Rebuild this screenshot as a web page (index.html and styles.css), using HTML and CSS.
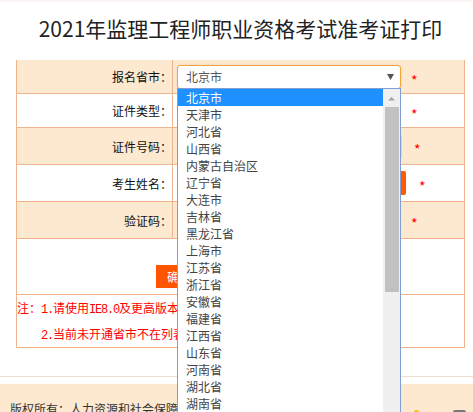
FILE: index.html
```html
<!DOCTYPE html>
<html lang="zh-CN">
<head>
<meta charset="utf-8">
<title>准考证打印</title>
<link rel="stylesheet" href="styles.css">
</head>
<body>
<div class="topbar"></div>
<div class="title">2021年监理工程师职业资格考试准考证打印</div>
<div class="form">
  <div class="row peach h33">
    <div class="label">报名省市：</div>
    <div class="value">
      <div class="select focus"><span>北京市</span><svg class="arrow" width="7" height="6" viewBox="0 0 7 6"><polygon points="0,0 7,0 3.5,6" fill="#555"/></svg></div>
      <span class="req r10">*</span>
    </div>
  </div>
  <div class="row h33">
    <div class="label">证件类型：</div>
    <div class="value">
      <div class="select"><span>身份证</span><svg class="arrow" width="7" height="6" viewBox="0 0 7 6"><polygon points="0,0 7,0 3.5,6" fill="#555"/></svg></div>
      <span class="req r10">*</span>
    </div>
  </div>
  <div class="row peach h36">
    <div class="label">证件号码：</div>
    <div class="value">
      <div class="input w225"></div>
      <span class="req r12">*</span>
    </div>
  </div>
  <div class="row h36">
    <div class="label">考生姓名：</div>
    <div class="value">
      <div class="input w140"></div>
      <div class="getbtn">获取</div>
      <span class="req r13">*</span>
    </div>
  </div>
  <div class="row peach h36">
    <div class="label">验证码：</div>
    <div class="value">
      <div class="input w224"></div>
      <span class="req r10">*</span>
    </div>
  </div>
  <div class="row btnrow">
    <div class="submit">确定</div>
  </div>
  <div class="row notes">
    <div class="note">注：<span class="mono">1.</span>请使用<span class="mono">IE8.0</span>及更高版本浏览器。</div>
    <div class="note indent"><span class="mono">2.</span>当前未开通省市不在列表中。</div>
  </div>

  <div class="dropdown">
    <div class="list">
      <div class="opt sel">北京市</div>
      <div class="opt">天津市</div>
      <div class="opt">河北省</div>
      <div class="opt">山西省</div>
      <div class="opt">内蒙古自治区</div>
      <div class="opt">辽宁省</div>
      <div class="opt">大连市</div>
      <div class="opt">吉林省</div>
      <div class="opt">黑龙江省</div>
      <div class="opt">上海市</div>
      <div class="opt">江苏省</div>
      <div class="opt">浙江省</div>
      <div class="opt">安徽省</div>
      <div class="opt">福建省</div>
      <div class="opt">江西省</div>
      <div class="opt">山东省</div>
      <div class="opt">河南省</div>
      <div class="opt">湖北省</div>
      <div class="opt">湖南省</div>
      <div class="opt">广东省</div>
    </div>
    <div class="scroll">
      <div class="up"><svg width="17" height="17" viewBox="0 0 17 17"><polygon points="5,11.5 12,11.5 8.5,8" fill="#a3a3a3"/></svg></div>
      <div class="thumb"></div>
    </div>
  </div>
</div>
<div class="rule"></div>
<div class="footer">
  <div class="ftext">版权所有：人力资源和社会保障部人事考试中心</div>
  <div class="icons"><span class="ic1"></span><span class="ic2"></span></div>
</div>
</body>
</html>
```
FILE: styles.css
```css
html, body {
  margin: 0;
  padding: 0;
  overflow: hidden;
}
body {
  width: 473px;
  height: 412px;
  background: #fff;
  font-family: "Noto Sans CJK SC", "Noto Sans", sans-serif;
  font-size: 12px;
  color: #111;
}
.topbar {
  height: 2px;
  background: #fbf6f3;
}
.title {
  height: 58px;
  line-height: 52px;
  padding-left: 8px;
  text-align: center;
  font-size: 21px;
  color: #222;
}
.form {
  position: relative;
  margin-left: 16px;
  width: 447px;
  border-left: 1px solid #efb48c;
  border-right: 1px solid #efb48c;
}
.row {
  display: flex;
  border-bottom: 1px solid #efb48c;
}
.peach {
  background: #fde9d0;
}
.h33 { height: 33px; }
.h36 { height: 36px; }
.label {
  width: 155px;
  flex: none;
  border-right: 1px solid #efb48c;
  display: flex;
  align-items: center;
  justify-content: flex-end;
  color: #111;
}
.value {
  display: flex;
  align-items: center;
  padding-left: 4px;
}
.select {
  box-sizing: border-box;
  width: 224px;
  height: 24px;
  border: 1px solid #d9d9d9;
  border-radius: 3px;
  background: #fff;
  display: flex;
  align-items: center;
  justify-content: space-between;
  padding: 0 6px 0 8px;
  color: #555;
}
.select.focus {
  border-color: #f2a33a;
  box-shadow: 0 0 3px rgba(0,0,0,0.08);
}
.input {
  box-sizing: border-box;
  height: 25px;
  border: 1px solid #cfd5dc;
  border-radius: 3px;
  background: #fff;
}
.w225 { width: 225px; }
.w224 { width: 224px; }
.w140 { width: 140px; }
.getbtn {
  margin-left: 4px;
  width: 85px;
  height: 24px;
  border-radius: 2px;
  background: #ff5a00;
  color: #fff;
  line-height: 24px;
  text-align: center;
}
.req {
  color: #f00;
  font-size: 14px;
  padding-top: 6px;
}
.r10 { margin-left: 10px; }
.r12 { margin-left: 12px; }
.r13 { margin-left: 13px; }
.btnrow {
  height: 56px;
  box-sizing: border-box;
  padding: 26px 0 0 139px;
  align-items: flex-start;
}
.submit {
  height: 23px;
  line-height: 23px;
  padding: 0 11px;
  background: #ff5400;
  color: #fff;
  font-size: 12px;
}
.notes {
  height: 52px;
  flex-direction: column;
  color: #f00;
}
.note {
  line-height: 26px;
  height: 26px;
  white-space: nowrap;
}
.indent {
  padding-left: 24px;
}
.mono {
  font-family: "Liberation Mono", monospace;
  letter-spacing: -1.2px;
}
.dropdown {
  position: absolute;
  left: 160px;
  top: 28px;
  box-sizing: border-box;
  width: 224px;
  height: 340px;
  border: 1px solid #7f9ed6;
  background: #fff;
  display: flex;
}
.list {
  flex: 1;
  overflow: hidden;
}
.opt {
  height: 17px;
  line-height: 18px;
  padding-left: 8px;
  color: #444;
  white-space: nowrap;
}
.opt.sel {
  background: #1e90ff;
  color: #fff;
}
.scroll {
  width: 17px;
  flex: none;
  background: #f0f0f0;
}
.up {
  height: 17px;
}
.up svg {
  display: block;
}
.thumb {
  margin: 1px 1px 0 2px;
  height: 185px;
  background: #c1c1c1;
}
.rule {
  margin-top: 28px;
  height: 1px;
  background: #f1dccd;
}
.footer {
  margin-top: 7px;
  height: 40px;
  background: #fde9d0;
  display: flex;
  align-items: flex-start;
  padding-left: 10px;
}
.ftext {
  width: 404px;
  flex: none;
  margin-top: 17px;
  line-height: 16px;
  color: #333;
}
.icons {
  margin-top: 26px;
  display: flex;
}
.ic1 {
  width: 5px;
  height: 10px;
  border-radius: 2px;
  background: #f2c21a;
}
.ic2 {
  margin-left: 34px;
  width: 13px;
  height: 10px;
  border-radius: 2px;
  background: #777;
}
```
